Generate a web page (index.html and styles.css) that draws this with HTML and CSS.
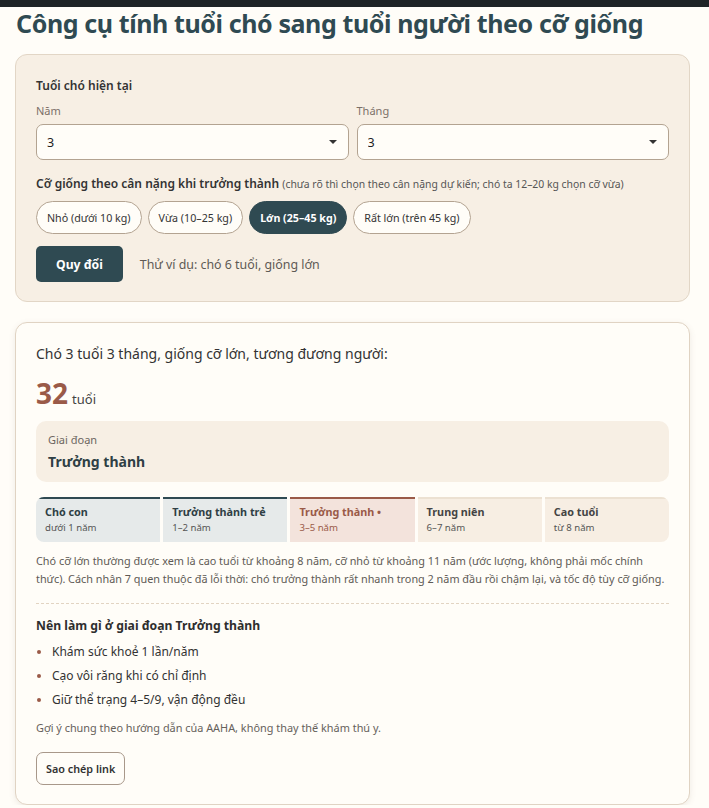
FILE: index.html
```html
<!DOCTYPE html>
<html lang="vi">
<head>
    <meta charset="UTF-8">
    <meta name="viewport" content="width=device-width, initial-scale=1.0">
    <title>Tuổi chó sang tuổi người</title>
    <link rel="stylesheet" href="styles.css">
</head>
<body>
    <div class="topbar"></div>
    <main class="page">
        <h1>Công cụ tính tuổi chó sang tuổi người theo cỡ giống</h1>

        <section class="form-card">
            <p class="field-title">Tuổi chó hiện tại</p>
            <div class="age-row">
                <label class="field">
                    <span class="field-label">Năm</span>
                    <span class="select">
                        <select>
                            <option>3</option>
                        </select>
                    </span>
                </label>
                <label class="field">
                    <span class="field-label">Tháng</span>
                    <span class="select">
                        <select>
                            <option>3</option>
                        </select>
                    </span>
                </label>
            </div>

            <p class="field-title size-title">Cỡ giống theo cân nặng khi trưởng thành <small>(chưa rõ thì chọn theo cân nặng dự kiến; chó ta 12–20 kg chọn cỡ vừa)</small></p>
            <div class="sizes">
                <button class="pill">Nhỏ (dưới 10 kg)</button>
                <button class="pill">Vừa (10–25 kg)</button>
                <button class="pill active">Lớn (25–45 kg)</button>
                <button class="pill">Rất lớn (trên 45 kg)</button>
            </div>

            <div class="actions">
                <button class="btn-main">Quy đổi</button>
                <span class="example">Thử ví dụ: chó 6 tuổi, giống lớn</span>
            </div>
        </section>

        <section class="result-card">
            <p class="result-lead">Chó 3 tuổi 3 tháng, giống cỡ lớn, tương đương người:</p>
            <p class="result-age"><strong>32</strong> tuổi</p>

            <div class="stage-box">
                <span class="stage-label">Giai đoạn</span>
                <span class="stage-name">Trưởng thành</span>
            </div>

            <!-- thanh các giai đoạn -->
            <div class="timeline">
                <div class="step done"><b>Chó con</b><span>dưới 1 năm</span></div>
                <div class="step done"><b>Trưởng thành trẻ</b><span>1–2 năm</span></div>
                <div class="step current"><b>Trưởng thành •</b><span>3–5 năm</span></div>
                <div class="step"><b>Trung niên</b><span>6–7 năm</span></div>
                <div class="step"><b>Cao tuổi</b><span>từ 8 năm</span></div>
            </div>

            <p class="note">Chó cỡ lớn thường được xem là cao tuổi từ khoảng 8 năm, cỡ nhỏ từ khoảng 11 năm (ước lượng, không phải mốc chính thức). Cách nhân 7 quen thuộc đã lỗi thời: chó trưởng thành rất nhanh trong 2 năm đầu rồi chậm lại, và tốc độ tùy cỡ giống.</p>

            <h2>Nên làm gì ở giai đoạn Trưởng thành</h2>
            <ul class="tips">
                <li>Khám sức khoẻ 1 lần/năm</li>
                <li>Cạo vôi răng khi có chỉ định</li>
                <li>Giữ thể trạng 4–5/9, vận động đều</li>
            </ul>
            <p class="source">Gợi ý chung theo hướng dẫn của AAHA, không thay thế khám thú y.</p>

            <button class="btn-outline">Sao chép link</button>
        </section>
    </main>
</body>
</html>
```

FILE: styles.css
```css
* {
    box-sizing: border-box;
}
body {
    margin: 0;
    background: #fffdf8;
    color: #2e2e2e;
    font-family: 'Segoe UI', 'Noto Sans', sans-serif;
}
.topbar {
    height: 7px;
    background: #1e2326;
}
.page {
    padding: 0 19px 0 15px;
}
h1 {
    margin: 0 0 14px 1px;
    font-size: 25px;
    line-height: 33px;
    font-weight: 700;
    color: #2f4a52;
    letter-spacing: -0.4px;
}

/* Khung nhập */
.form-card {
    background: #f7efe4;
    border: 1px solid #e2d6c6;
    border-radius: 12px;
    padding: 21px 20px 19px;
}
.field-title {
    margin: 0;
    font-size: 12px;
    font-weight: 600;
    color: #333;
    line-height: 20px;
}
.field-title small {
    font-size: 10.4px;
    font-weight: 400;
    color: #555;
}
.age-row {
    display: flex;
    gap: 8px;
    margin: 7px 0 14px;
}
.field {
    flex: 1;
    display: flex;
    flex-direction: column;
}
.field-label {
    font-size: 11px;
    color: #7c7068;
    line-height: 16px;
    margin-bottom: 5px;
}
.select {
    position: relative;
    display: block;
}
/* mũi tên nhỏ của ô chọn */
.select::after {
    content: "";
    position: absolute;
    right: 12px;
    top: 16px;
    border-left: 4px solid transparent;
    border-right: 4px solid transparent;
    border-top: 4px solid #333;
    pointer-events: none;
}
select {
    appearance: none;
    width: 100%;
    height: 36px;
    padding: 0 10px;
    font-family: inherit;
    font-size: 12.5px;
    color: #222;
    background: #fffdf8;
    border: 1px solid #b3a391;
    border-radius: 7px;
}
.sizes {
    display: flex;
    gap: 6px;
    margin: 7px 0 12px;
}
.pill {
    height: 33px;
    padding: 0 10px;
    font-family: inherit;
    font-size: 10.7px;
    color: #333;
    background: #fffdf8;
    border: 1px solid #b3a391;
    border-radius: 17px;
}
.pill.active {
    background: #2f4a52;
    border-color: #2f4a52;
    color: #fff;
    font-weight: 700;
}
.actions {
    display: flex;
    align-items: center;
    gap: 17px;
}
.btn-main {
    height: 36px;
    padding: 0 20px;
    font-family: inherit;
    font-size: 12.2px;
    font-weight: 700;
    color: #fff;
    background: #2f4a52;
    border: none;
    border-radius: 5px;
}
.example {
    font-size: 12.4px;
    color: #5e5a55;
}

/* Kết quả */
.result-card {
    margin-top: 20px;
    background: #fffdf8;
    border: 1px solid #e0d3c3;
    border-radius: 12px;
    box-shadow: 0 2px 6px rgba(120, 100, 80, 0.12);
    padding: 20px 20px 19px;
}
.result-lead {
    margin: 0;
    font-size: 14px;
    line-height: 22px;
    color: #333;
}
.result-age {
    display: flex;
    align-items: baseline;
    gap: 4px;
    height: 40px;
    margin: 8px 0 8px;
    font-size: 13px;
    color: #444;
    line-height: 40px;
}
.result-age strong {
    font-size: 28px;
    color: #9a5a48;
    font-weight: 700;
}
.stage-box {
    display: flex;
    flex-direction: column;
    gap: 3px;
    background: #f7efe4;
    border-radius: 10px;
    padding: 11px 12px 9px;
}
.stage-label {
    font-size: 11px;
    color: #6b6560;
    line-height: 16px;
}
.stage-name {
    font-size: 14px;
    font-weight: 700;
    color: #2f3f45;
    line-height: 22px;
}
.timeline {
    display: grid;
    grid-template-columns: repeat(5, 1fr);
    gap: 3px;
    margin-top: 15px;
    border-radius: 8px;
    overflow: hidden;
}
.step {
    display: flex;
    flex-direction: column;
    gap: 1px;
    padding: 5px 9px 7px;
    background: #f7eee3;
    border-top: 2px solid #ece1d2;
}
.step b {
    font-size: 10.8px;
    color: #444;
    line-height: 16px;
}
.step span {
    font-size: 9.6px;
    color: #555;
    line-height: 14px;
}
.step.done {
    background: #e6eaea;
    border-top-color: #2f4a52;
}
.step.done b {
    color: #2f3f45;
}
.step.current {
    background: #f3e3dc;
    border-top-color: #9a5a48;
}
.step.current b,
.step.current span {
    color: #9a5a48;
}
.note {
    margin: 10px 0 0;
    padding-bottom: 15px;
    border-bottom: 1px dashed #e2d4c2;
    font-size: 10.85px;
    line-height: 18px;
    color: #5e5a55;
}
h2 {
    margin: 11px 0 0;
    font-size: 12.2px;
    font-weight: 700;
    color: #2e2e2e;
    line-height: 22px;
}
.tips {
    margin: 3px 0 0;
    padding-left: 16px;
}
.tips li {
    font-size: 12px;
    line-height: 24px;
    color: #333;
}
.tips li::marker {
    color: #9a5a48;
}
.source {
    margin: 6px 0 14px;
    font-size: 10.9px;
    color: #66615b;
    line-height: 20px;
}
.btn-outline {
    height: 33px;
    padding: 0 9px;
    font-family: inherit;
    font-size: 10.8px;
    font-weight: 600;
    color: #333;
    background: #fffdf8;
    border: 1px solid #a8988a;
    border-radius: 7px;
}
```
